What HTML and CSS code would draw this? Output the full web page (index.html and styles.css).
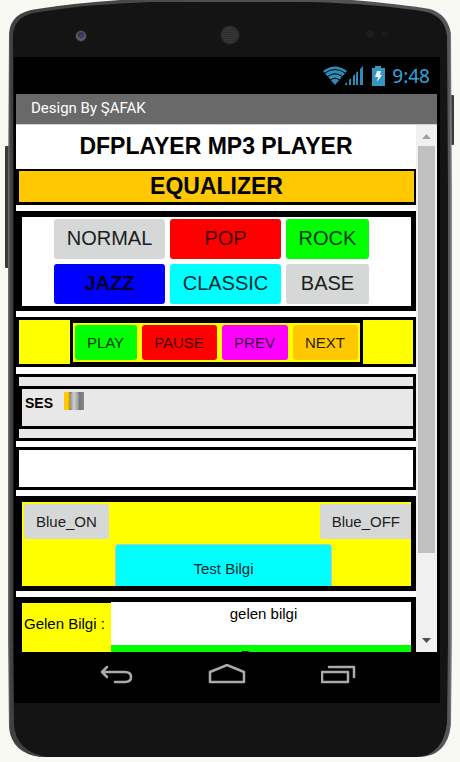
FILE: index.html
```html
<!DOCTYPE html>
<html lang="tr">
<head>
<meta charset="utf-8">
<meta name="viewport" content="width=device-width, initial-scale=1">
<title>DFPLAYER MP3 PLAYER</title>
<link rel="stylesheet" href="styles.css">
</head>
<body>
<svg class="frame" viewBox="0 0 460 762" preserveAspectRatio="none" aria-hidden="true">
  <defs>
    <linearGradient id="side" x1="0" x2="1" y1="0" y2="0">
      <stop offset="0" stop-color="#777"/><stop offset=".006" stop-color="#404040"/>
      <stop offset=".5" stop-color="#505050"/><stop offset=".994" stop-color="#55555a"/><stop offset="1" stop-color="#999"/>
    </linearGradient>
    <pattern id="mesh" width="2" height="2" patternUnits="userSpaceOnUse"><circle cx="1" cy="1" r=".6" fill="#777"/></pattern>
  </defs>
  <rect x="5" y="146" width="5" height="122" rx="1" fill="#3a3a3a"/>
  <rect x="449" y="95" width="5" height="50" rx="1" fill="#3a3a3a"/>
  <path d="M8 190 L9 33 Q11 12 37 9 Q75 3 120 0 V-2 H352 V0 Q400 4 430 9 Q447 14 451 33 L452 190 V640 L451 725 Q447 757 418 757 H40 Q12 753 9 728 L8 640Z" fill="url(#side)"/>
  <path d="M13 190 V34 Q15 15 39 12 Q90 4 150 2 H310 Q380 4 427 12 Q445 17 447 36 L448 190 V640 L447 723 Q443 756 416 757 H46 Q16 751 14 725 L13 640Z" fill="#141414"/>
  <circle cx="81" cy="36" r="6" fill="#242424"/><circle cx="81" cy="36" r="5" fill="#5a5a5a"/><circle cx="81" cy="35" r="3" fill="#333350"/><circle cx="81" cy="36" r="1.500" fill="#3535b8"/>
  <circle cx="230" cy="35" r="10" fill="#1c1c1c"/><circle cx="230" cy="35" r="9" fill="url(#mesh)"/>
  <circle cx="370" cy="34" r="4" fill="#1c1c1c"/><circle cx="385" cy="34" r="3" fill="#1c1c1c"/>
</svg>
<div class="phone">
  <div class="screen">
    <div class="status">
      <svg width="42" height="20" viewBox="0 0 42 20" aria-hidden="true">
        <path d="M0 5Q12-4 24 5L12 19Z" fill="#2d8db8"/>
        <path d="M1 7.500Q12-.5 23 7.500M4 11Q12 4.500 20 11M7 14.500Q12 10 17 14.500" fill="none" stroke="#000"/>
        <path d="M22 19V18L24 16V19ZM26 19V14L28 12V19ZM30 19V10L32 8V19ZM33 19V7L35 5V19ZM37 19V3L40 0V19Z" fill="#2d8db8"/>
      </svg>
      <svg width="13" height="20" viewBox="0 0 13 20" aria-hidden="true"><path d="M0 2H3V0H9V2H13V20H0Z" fill="#3596c1"/><path d="M5 5H9L8 9H10L5 16L6 11H3Z" fill="#e8f4fa"/></svg>
      <span>9:48</span>
    </div>
    <div class="app">
      <div class="title">Design By ŞAFAK</div>
      <div class="view">
        <main class="content">
          <h1 class="heading">DFPLAYER MP3 PLAYER</h1>
          <h2 class="equalizer">EQUALIZER</h2>
          <section class="panel presets">
            <button class="btn gray">NORMAL</button><button class="btn red">POP</button><button class="btn green">ROCK</button>
            <button class="btn blue">JAZZ</button><button class="btn cyan">CLASSIC</button><button class="btn gray">BASE</button>
          </section>
          <section class="transport">
            <div class="keys">
              <button class="btn green">PLAY</button><button class="btn red">PAUSE</button><button class="btn magenta">PREV</button><button class="btn amber">NEXT</button>
            </div>
          </section>
          <section class="volume">
            <div class="volume-row">
              <label for="ses">SES</label>
              <input id="ses" type="range" min="0" max="30" value="15">
            </div>
          </section>
          <section class="blank"></section>
          <section class="panel bluetooth">
            <div class="pair"><button class="btn gray">Blue_ON</button><button class="btn gray off">Blue_OFF</button></div>
            <button class="btn cyan test">Test Bilgi</button>
          </section>
          <section class="panel info">
            <div class="info-label">Gelen Bilgi :</div>
            <div class="info-values"><div class="incoming">gelen bilgi</div><div class="state">Durum</div></div>
          </section>
        </main>
        <div class="scrollbar" aria-hidden="true">
          <svg width="21" height="21" viewBox="0 0 21 21"><path d="M6 14L10.500 9L15 14Z" fill="#a0a0a0"/></svg>
          <div class="track"><div class="thumb"></div></div>
          <svg width="21" height="21" viewBox="0 0 21 21"><path d="M6 7L10.500 12L15 7Z" fill="#505050"/></svg>
        </div>
      </div>
    </div>
    <nav class="nav">
      <button aria-label="Back"><svg width="36" height="24" viewBox="0 0 36 24"><path d="M10 3L5 8L10 13M5 8H28Q34 8 34 13Q34 18 28 18H18"/></svg></button>
      <button aria-label="Home"><svg width="42" height="24" viewBox="0 0 42 24"><path d="M4 18V8L21 1L38 8V18Z"/></svg></button>
      <button aria-label="Recent apps"><svg width="36" height="24" viewBox="0 0 36 24"><path d="M1 8H27V18H1ZM8 3H33V13"/></svg></button>
    </nav>
  </div>
</div>
</body>
</html>
```
FILE: styles.css
```css
* { box-sizing: border-box; }
body {
  margin: 0;
  background: #f8f9f3;
  font-family: "Liberation Sans", Arial, sans-serif;
  font-size: 15px;
  color: #000;
}
h1, h2 { margin: 0; font-size: 23px; font-weight: bold; text-align: center; }
button { font-family: inherit; }

.frame { position: absolute; inset: 0; width: 100%; height: 100%; }
.phone { position: relative; height: 100vh; padding: 57px 20px 59px 14px; }
.screen { height: 100%; display: flex; flex-direction: column; background: #000; }

.status {
  height: 37px;
  flex: none;
  display: flex;
  justify-content: flex-end;
  align-items: center;
  gap: 7px;
  padding-right: 10px;
  font-family: "Noto Sans", sans-serif;
  font-size: 19px;
  color: #33a5d6;
}

.app { flex: 1; min-height: 0; display: flex; flex-direction: column; margin: 0 3px 0 2px; }
.title {
  height: 31px;
  flex: none;
  padding-left: 15px;
  border-bottom: 1px solid #d0d0d0;
  background: #696969;
  color: #fff;
  font: 400 15px/28px Roboto, sans-serif;
}
.view { flex: 1; min-height: 0; display: flex; background: #fff; }
.content { flex: 1; min-width: 0; overflow: hidden; }

.heading { height: 44px; line-height: 42px; }
.equalizer {
  height: 36px;
  margin-bottom: 6px;
  border: 3px solid #000;
  border-width: 2px 2px 3px 3px;
  background: #ffc800;
  line-height: 30px;
}

.btn {
  height: 35px;
  padding: 0 12px;
  border: 0;
  border-radius: 3px;
  font-size: 15px;
  color: #1c1c1c;
}
.gray { background: #d6d8d8; }
.red { background: #f00; color: #400000; }
.green { background: #0f0; color: #003500; }
.blue { background: #00f; color: #000020; font-weight: bold; }
.cyan { background: #0ff; color: #002c2c; }
.magenta { background: #f0f; color: #350035; }
.amber { background: #ffc800; color: #2c2200; }

.panel { margin-bottom: 6px; border: 6px solid #000; border-width: 6px 5px 5px 6px; }
.presets {
  display: grid;
  grid-template-columns: 111px 111px 83px;
  justify-content: center;
  gap: 5px;
  padding: 2px 10px 2px 0;
}
.presets .btn { height: 40px; padding: 0 0 2px; font-size: 20px; }

.transport {
  display: flex;
  justify-content: center;
  margin-bottom: 7px;
  border: 3px solid #000;
  background: #ff0;
}
.keys {
  display: grid;
  grid-template-columns: 62px 75px 66px 65px;
  gap: 5px;
  padding: 2px;
  border: 3px solid #000;
  border-bottom-width: 2px;
}
.keys .btn { padding: 0; }

.volume { height: 67px; margin-bottom: 6px; padding: 9px 0; border: 3px solid #000; background: #e8e8e8; }
.volume-row {
  height: 43px;
  display: flex;
  align-items: flex-start;
  gap: 11px;
  padding: 2px 3px;
  border: 3px solid #000;
  border-right: 0;
}
.volume label { font-size: 14px; font-weight: bold; line-height: 24px; }
.volume input {
  appearance: none;
  width: 20px;
  height: 18px;
  margin: 1px 0 0;
  background: linear-gradient(90deg, #ffc800 0 4px, #b88a00 6px, #555 6px, #888);
}
.volume input::-webkit-slider-thumb {
  appearance: none;
  width: 9px;
  height: 18px;
  border-radius: 2px;
  background: linear-gradient(90deg, #909090, #d0d0d0 45%, #909090);
}

.blank { height: 43px; margin-bottom: 6px; border: 3px solid #000; }

.bluetooth {
  height: 95px;
  display: flex;
  flex-direction: column;
  align-items: center;
  gap: 5px;
  padding-top: 2px;
  overflow: hidden;
  background: #ff0;
}
.pair { width: 100%; display: flex; justify-content: space-between; padding-left: 2px; }
.off { border-radius: 3px 0 0 3px; padding-right: 11px; }
.test { flex: none; width: 56%; height: 48px; margin-left: 14px; border: 1px solid #b8c8c8; }

.info { display: flex; height: 110px; border-top-width: 5px; }
.info-label { width: 89px; flex: none; padding: 0 2px; border-top: 1px solid #000; background: #ff0; line-height: 42px; white-space: nowrap; }
.info-values { flex: 1; text-align: center; }
.incoming { height: 43px; padding-left: 5px; line-height: 24px; }
.state { height: 43px; background: #0f0; padding-left: 5px; line-height: 22px; }

.scrollbar { width: 21px; flex: none; display: flex; flex-direction: column; background: #f0f0f0; }
.scrollbar svg { flex: none; }
.track { flex: 1; padding: 0 2px; }
.thumb { height: 84%; background: #c0c0c0; }

.nav { height: 51px; flex: none; display: flex; justify-content: space-around; padding: 12px 46px 0; }
.nav button { height: 24px; padding: 0; border: 0; background: none; }
.nav svg { display: block; fill: none; stroke: #aaa; stroke-width: 2.500; stroke-linejoin: round; stroke-linecap: round; }
```
